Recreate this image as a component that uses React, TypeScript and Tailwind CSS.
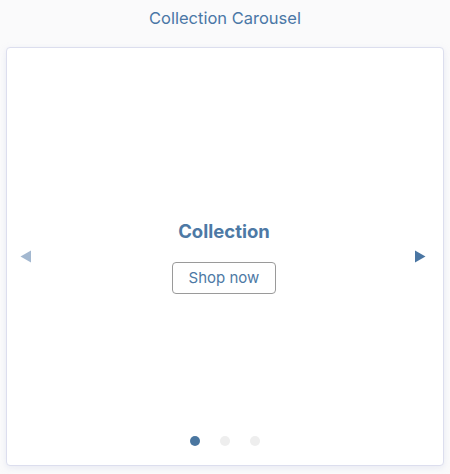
import { useState } from "react";

const slides = ["Collection", "Collection", "Collection"];

export default function App() {
  const [active, setActive] = useState(0);

  return (
    <div className="h-[474px] w-[450px] bg-[#fafafb] px-[6px] pt-[8px] font-['Inter',sans-serif]">
      <h1 className="text-center text-[16.5px] leading-[20px] text-[#4a77a6]">Collection Carousel</h1>

      <div className="mt-[19px] flex h-[419px] flex-col rounded-[4px] border border-[#dcdeee] bg-white shadow-[0_2px_6px_rgba(200,205,230,0.35)]">
        <div className="flex flex-1 items-center pt-[28px]">
          <button
            className="ml-[13px] flex h-[13px] w-[12px] items-center justify-center"
            onClick={() => setActive((active + 2) % 3)}
            aria-label="Previous"
          >
            <svg width="12" height="13" viewBox="0 0 12 13">
              <path d="M0.5 6.5 L11 0.5 L11 12.5 Z" fill="#a3b8d0" />
            </svg>
          </button>

          <div className="ml-[2px] flex flex-1 flex-col items-center pt-[2px]">
            <h2 className="text-[18.5px] font-bold leading-[22px] text-[#4d79a5]">{slides[active]}</h2>
            <button className="mt-[20px] h-[32px] w-[104px] rounded-[4px] border border-[#9a9a9a] text-[15px] text-[#4d79a5]">
              Shop now
            </button>
          </div>

          <button
            className="mr-[17px] flex h-[13px] w-[12px] items-center justify-center"
            onClick={() => setActive((active + 1) % 3)}
            aria-label="Next"
          >
            <svg width="12" height="13" viewBox="0 0 12 13">
              <path d="M1 0.5 L11.5 6.5 L1 12.5 Z" fill="#4a76a3" />
            </svg>
          </button>
        </div>

        <div className="mb-[19px] flex justify-center gap-[20px]">
          {slides.map((_, i) => (
            <button
              key={i}
              onClick={() => setActive(i)}
              className={`h-[10px] w-[10px] rounded-full ${i === active ? "bg-[#4a76a0]" : "bg-[#eeeeee]"}`}
            />
          ))}
        </div>
      </div>
    </div>
  );
}
